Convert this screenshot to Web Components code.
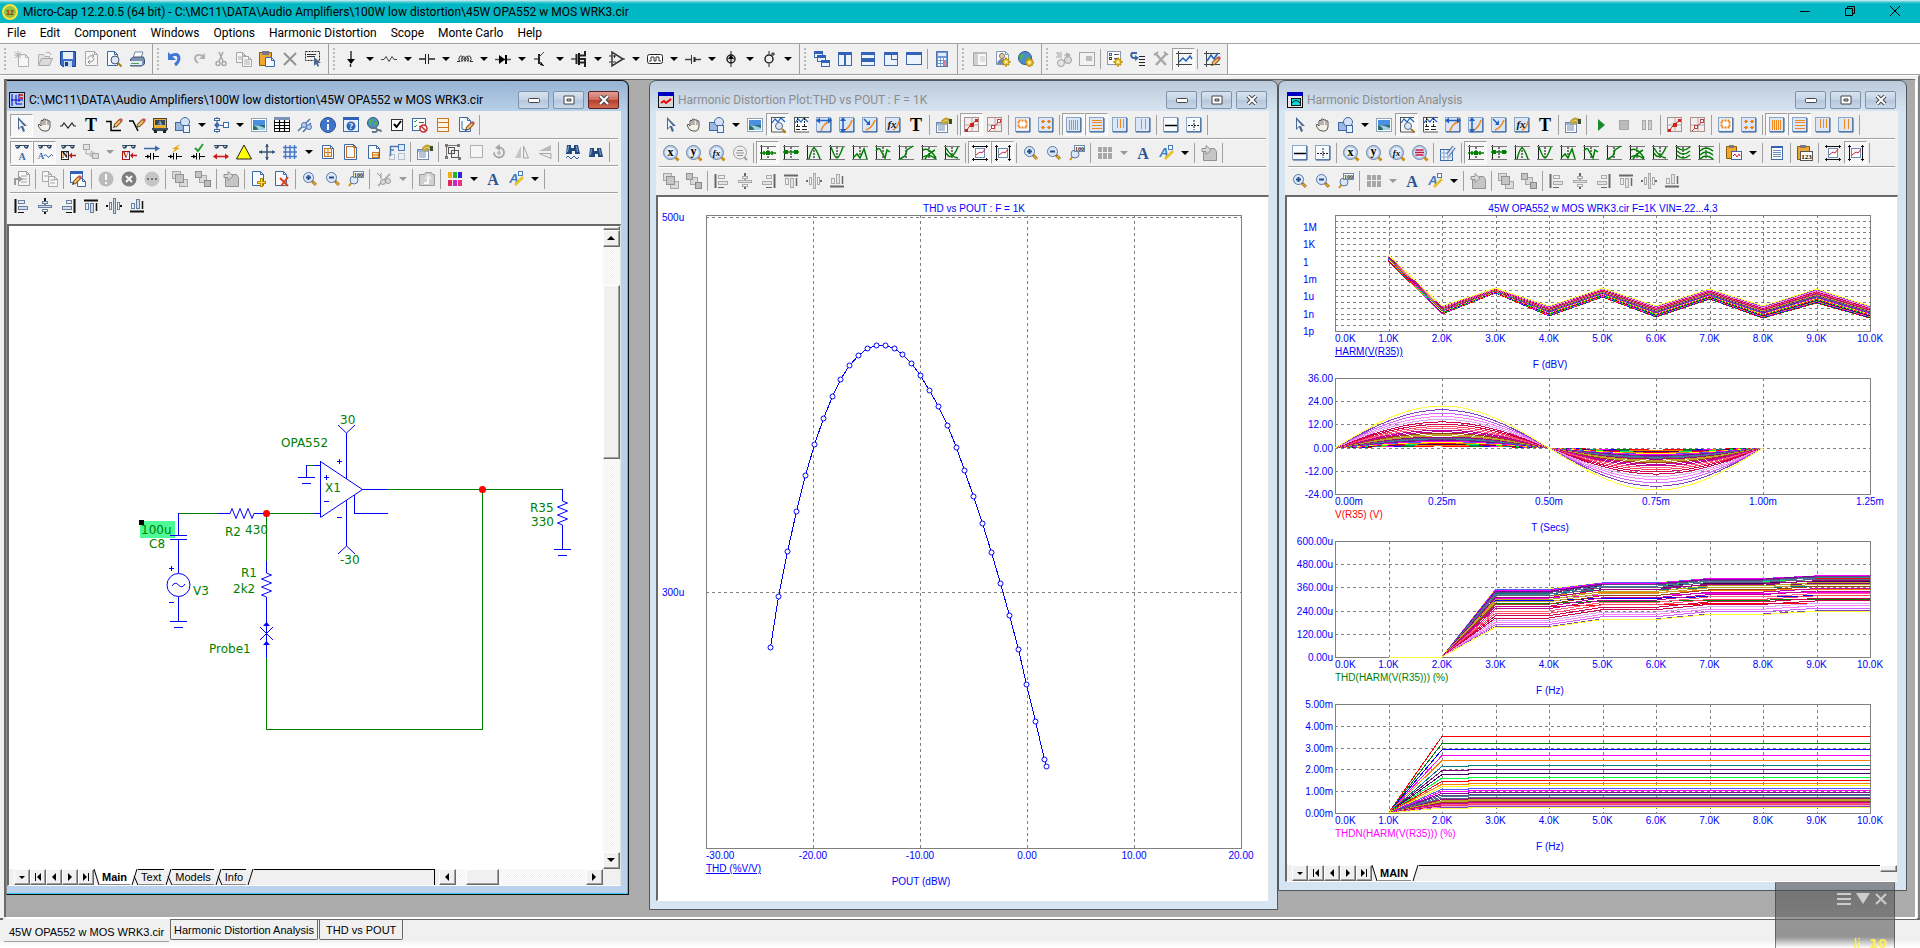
<!DOCTYPE html>
<html lang="en">
<head>
<meta charset="utf-8">
<title>Micro-Cap 12.2.0.5 (64 bit)</title>
<style>
  html, body {
    margin: 0;
    height: 100%;
    overflow: hidden;
  }
  body {
    background: #fff;
    color: #000;
    font: 12px/16px Roboto, "Open Sans", sans-serif;
  }
</style>
</head>
<body>
<mc-app>
  <mc-titlebar slot="top">Micro-Cap 12.2.0.5 (64 bit) - C:\MC11\DATA\Audio Amplifiers\100W low distortion\45W OPA552 w MOS WRK3.cir</mc-titlebar>
  <mc-menubar slot="top" items="File,Edit,Component,Windows,Options,Harmonic Distortion,Scope,Monte Carlo,Help"></mc-menubar>
  <mc-toolbar slot="bands" band items="new~ open~ save revert~ preview print"></mc-toolbar>
  <mc-toolbar slot="bands" band items="undo redo~ cut~ copy~ paste del~ selbox"></mc-toolbar>
  <mc-toolbar slot="bands" band items="gnd v res v cap v ind v diode v npn v mos v opamp v pulse v batt v isrc v vsrc v"></mc-toolbar>
  <mc-toolbar slot="bands" band items="cascade tilev tileh overlap maximize | calc"></mc-toolbar>
  <mc-toolbar slot="bands" band items="panel~ usergear globegear"></mc-toolbar>
  <mc-toolbar slot="bands" band items="convert~ pane~ | listgear goto tools~ scope* | scopepen"></mc-toolbar>

  <mc-window active style="--left: 0px; --top: 0px; --width: 623px; --height: 815px" label="C:\MC11\DATA\Audio Amplifiers\100W low distortion\45W OPA552 w MOS WRK3.cir" icon="appsch">
    <mc-toolbar slot="tools" items="cursor* hand zigzag bigT ortho diag bus shapes v flow v picture table link info help globelink check listno rows pagepen |"></mc-toolbar>
    <mc-toolbar slot="tools" items="textA* attrA* nodeN tree~ w nodeV current power cond pins tri cross grid v pagegrid pageblank pagetitle region | props | group blank~ rotate~ fliph~ flipv~ | findwave find |"></mc-toolbar>
    <mc-toolbar slot="tools" items="pagego~ | copytree~ | editwin | bang~ xcircle~ dots~ | front~ back~ | boxgo~ | pageadd pagedel | zoomin zoomout zoom100 | probe~ w | folderup~ | colors v fontA fillA v |"></mc-toolbar>
    <mc-toolbar slot="tools" items="alignl alignc alignr alignt alignm alignb"></mc-toolbar>
    <mc-schematic></mc-schematic>
    <mc-sheets slot="foot" tabs="Main,Text,Models,Info" scroll></mc-sheets>
  </mc-window>

  <mc-window style="--left: 643px; --top: 0px; --width: 629px; --height: 830px; --row: 28px" label="Harmonic Distortion Plot:THD vs POUT : F = 1K" icon="appplot">
    <mc-toolbar slot="tools" items="cursor hand shapes v picture scalemode* cursormode panx pany pan fx bigT | props | markon* markoff | sqdash sqdots | gridv* gridh* gridv3 gridv2 | hline hdash |"></mc-toolbar>
    <mc-toolbar slot="tools" items="zx zy zfx zlist~ | mnext* mnear mpeak mvalley mhigh mlow minfl mtop mbot | tagh* tagv* | zoomin zoomout zoom100 | palette~ w fontA fillA v | boxgo~ |"></mc-toolbar>
    <mc-toolbar slot="tools" items="front~ back~ | alignl~ alignc~ alignr~ alignt~ alignm~ alignb~"></mc-toolbar>
    <mc-plots data="pout"></mc-plots>
  </mc-window>

  <mc-window style="--left: 1272px; --top: 0px; --width: 629px; --height: 811px; --row: 28px" label="Harmonic Distortion Analysis" icon="apphda">
    <mc-toolbar slot="tools" items="cursor hand shapes v picture scalemode* cursormode panx pany pan fx bigT | props | play stop~ pause~ | markon markoff | sqdash sqdots | gridv* gridh* gridv3 gridv2 |"></mc-toolbar>
    <mc-toolbar slot="tools" items="hline hdash | zx zy zfx zred | sheetpen | mnext* mnear mpeak mvalley mhigh mlow minfl mtop mbot mglow mghigh | pastewave v | textpage | paste123 | tagh tagv* |"></mc-toolbar>
    <mc-toolbar slot="tools" items="zoomin zoomout zoom100 | palette~ w fontA fillA v | boxgo~ | front~ back~ | alignl~ alignc~ alignr~ alignt~ alignm~ alignb~"></mc-toolbar>
    <mc-plots data="analysis"></mc-plots>
    <mc-sheets slot="foot" tabs="MAIN"></mc-sheets>
  </mc-window>

  <mc-doctabs slot="bottom" tabs="45W OPA552 w MOS WRK3.cir,Harmonic Distortion Analysis,THD vs POUT"></mc-doctabs>
  <mc-gadget slot="over">li&nbsp; <b>10</b></mc-gadget>
</mc-app>

<script>
// ---- icons, all on a 16 x 16 grid ----
const P = (d, stroke = '#000', width = 1, fill = 'none') =>
  `<path d="${d}" stroke="${stroke}" stroke-width="${width}" fill="${fill}"/>`
const F = (d, fill = '#000') => `<path d="${d}" fill="${fill}"/>`
const R = (x, y, w, h, fill = 'none', stroke = 'none') =>
  `<rect x="${x}" y="${y}" width="${w}" height="${h}" fill="${fill}" stroke="${stroke}"/>`
const C = (x, y, r, fill = 'none', stroke = 'none', width = 1) =>
  `<circle cx="${x}" cy="${y}" r="${r}" fill="${fill}" stroke="${stroke}" stroke-width="${width}"/>`
const T = (s, x, y, size, fill = '#000', font = 'Liberation Serif', style = '') =>
  `<text x="${x}" y="${y}" font-size="${size}" font-weight="bold" font-family="${font}, serif" text-anchor="middle" fill="${fill}" ${style}>${s}</text>`
const dash = (shape, pattern = '2 1') => shape.replace('/>', ` stroke-dasharray="${pattern}"/>`)

const BLUE = '#3c68a8'
const SKY = '#dbe7f7'
const ORANGE = '#c87820'
const GREEN = '#008000'

const page = (x = 2.5, y = 1.5, w = 11, h = 13, c = BLUE) =>
  P(`M${x} ${y}h${w - 3}l3 3v${h - 3}h-${w}z`, c, 1, '#f8fbff') + P(`M${x + w - 3} ${y}v3h3`, c)
const pencil = (x = 0, y = 0) =>
  `<g transform="translate(${x} ${y})">` + P('M5 9l6-6', '#8a5a20', 4) + P('M5 9l6-6', '#f4c070', 2) +
  P('M10 4l2-2', '#d05050', 3) + F('M3 11l1-3 2 2z', '#333') + '</g>'
const glasses = F('M1 1h5v2q-2 3-4 1zM15 1h-5v2q2 3 4 1z', '#33475e') + P('M5 1.5h6', '#33475e') + F('M2 2h2v1h-2zM11 2h2v1h-2z', '#9cc4e8')
const gear = (x, y) =>
  P(`M${x - 4.5} ${y}h9M${x} ${y - 4.5}v9M${x - 3} ${y - 3}l6 6M${x + 3} ${y - 3}l-6 6`, '#b88c10', 2) + C(x, y, 3, '#f0d040', '#c09810') + C(x, y, 1, '#fff')
const lens = (x = 6.5, y = 6.5, r = 5) =>
  P(`M${x + r * 0.7} ${y + r * 0.7}l4 4`, '#b07a18', 3) + P(`M${x + r * 0.7 + 1} ${y + r * 0.7 + 1}l3 3`, '#f0c050', 1) + C(x, y, r, SKY, '#5578a8')
const disc = inner => P('M12 12l3.5 3.5', '#d09018', 3) + C(7.5, 7.5, 7, '#b8cdea', '#7088a8') + C(7.5, 7.5, 5, '#e8f0fa') + inner
const win = (x, y, w, h) => R(x + 0.5, y + 0.5, w - 1, h - 1, '#edf3fc', BLUE) + R(x, y, w, 3, '#2f62b8')
const chart = R(0.5, 0.5, 14, 14, SKY, '#8ba6c8') + P('M15 1v14H1', '#24508e')
const mode = d => P('M1.5 0v15', '#222') + P('M0 1.5h16M0 14.5h16', '#777') + dash(P('M8 2v12')) + P(d, GREEN, 1.5)
const cap2 = P('M1 12.5h5M10 12.5h5M6.5 9v6.5M9.5 9v6.5') + F('M6 12.5l-3-2v4z')
const bars = d => chart + P(d, '#f08820')
const globe = (x, y, r) => C(x, y, r, '#4a8ad0', '#30588c') + F(`M${x - r + 1} ${y - 2}q3-3 5-2l-1 3 -2 1 1 3 -2-1zM${x + 1} ${y}l3-2v4l-2 1z`, '#50b050')
const binoc = F('M2 4h4v3h3V4h4l2 9h-5v-3h-3v3H1z', '#23487c') + P('M3.5 5l-1 6M11.500 5l1 6', '#8ab0dc')

const icons = {
  new: page(4.5, 3.5, 10, 12, '#888') + P('M4 0v8M0 4h8M1 1l6 6M7 1L1 7', '#888'),
  open: P('M1.5 14V3.5h5l1 2h5v2', '#888', 1, '#ddd') + P('M1.5 14.5l3-7h11l-3 7z', '#777', 1, '#ccc') + P('M9 2q4-2 5 2', '#777'),
  save: P('M.5 .5h15v15h-13l-2-2z', '#16408c', 1, '#3c6cc8') + R(3, 1, 10, 7, '#e8f0fc') + R(4, 10, 8, 6, '#c8d8f0') + R(5, 11, 3, 4, '#16408c'),
  revert: page(2.5, .5, 12, 14, '#777') + P('M5 8q0-4 5-3M11 7q0 4-5 4M9 3l2 2-2 2M7 9l-2 2 2 2', '#555'),
  preview: page(1.5, .5, 10, 14) + P('M12 12l3.5 3.5', '#b07a18', 2) + C(9, 9, 4, SKY, '#405878'),
  print: P('M4 7l2-6h8l-2 6', '#7088a0', 1, '#fff') + P('M1.5 8l3-2h10l1 3v4l-3 2h-11z', '#405878', 1, '#7a92b0') + R(1, 10, 12, 4, '#e6ecf4') + R(2, 12, 8, 1, '#48a060'),
  undo: P('M3 5q8-4 9 2 0 4-4 7', '#3f78d8', 3) + F('M1 1v8h8z', '#3f78d8'),
  redo: P('M13 5Q6 2 5 7q0 3 3 5', '#888', 2) + F('M15 2v6H9z', '#888'),
  cut: P('M6 1l4 9M10 1L6 10', '#777', 1.5) + C(5, 12.5, 2, 'none', '#777', 1.5) + C(11, 12.5, 2, 'none', '#777', 1.5),
  copy: page(.5, 1.5, 9, 10, '#777') + page(6.5, 5.5, 9, 10, '#777') + P('M8 9h5M8 11h6M8 13h6M2 6h4M2 8h4', '#888'),
  paste: P('M.5 1.5h12v13H.5z', '#8a5a10', 1, '#eea830') + R(3, 0, 7, 4, '#778') + page(6.5, 6.5, 9, 9),
  del: P('M2 2l12 12M14 2L2 14', '#555', 2),
  selbox: dash(R(.5, .5, 14, 9, 'none', '#222')) + P('M2 3.5h9M2 5.5h8', '#333') + F('M9 6l0 9 2-2 2 3 1-1-1-3h3z', '#4a6890'),
  gnd: P('M8 0v11', '#333', 1.5) + F('M4 8h8l-4 5z') + P('M7.5 13v3', '#333', 1.5),
  res: P('M0 8.5h3l2-3 3 5 3-5 2 3h3', '#444'),
  cap: P('M0 8h6M10 8h6', '#555', 2) + P('M6.5 3v10M9.5 3v10', '#222'),
  ind: P('M0 10.5h3a2 3 0 1 1 2 0a2 3 0 1 1 3 0a2 3 0 1 1 3 0a2 3 0 1 1 2 0h3', '#333'),
  diode: P('M0 8.5h16', '#555', 1.5) + F('M4 4v9l6-4.5z') + P('M11 4v9', '#000', 2),
  npn: P('M1 8h5', '#555', 1.5) + P('M6 3v10', '#222', 2) + P('M6 6l5-5M6 10l5 5', '#444') + F('M8 11l3 4-4-1z'),
  mos: P('M0 8h5', '#555', 1.5) + P('M5.5 3v10', '#222', 2) + P('M8 2v12', '#111', 2) + P('M8 4.5h6V0M8 11.5h6V16M9 8h5v4', '#222', 2),
  opamp: P('M3 1v14l11-7z', '#333', 1.5, '#eee') + P('M0 5h3M0 11h3M14 8h2M4 5h3M5.5 4v3M4 11h3', '#333'),
  pulse: `<rect x=".5" y="3.5" width="15" height="9" rx="2" fill="#fff" stroke="#222"/>` + P('M2 10h2V6h3v4h2V6h3v4h2', '#333'),
  batt: P('M0 8.5h6M9 8.5h7', '#444', 1.5) + P('M6.5 4v9', '#333') + P('M9.5 6v5', '#222', 2),
  isrc: P('M8 0v16', '#222') + C(8, 8, 4, '#ddd', '#222', 1.5) + F('M5 8h6L8 4z') + P('M8 5v7'),
  vsrc: P('M8 0v3M8 13v3M12 1v4M10 3h4', '#222') + C(8, 8, 4, '#eee', '#222', 1.5),
  cascade: win(0, 0, 9, 7) + win(3, 4, 9, 7) + win(7, 9, 9, 7),
  tilev: win(1, 1, 7, 14) + win(8, 1, 7, 14),
  tileh: win(1, 1, 14, 7) + win(1, 8, 14, 7),
  overlap: win(1, 1, 14, 14) + win(8, 1, 7, 8),
  maximize: win(0, 1, 16, 13),
  calc: R(2.5, .5, 11, 15, '#6f98d8', '#5078a8') + R(4, 2, 8, 3, '#dfeaff') + F('M4 7h2v2H4zM7 7h2v2H7zM10 7h2v2h-2zM4 10h2v2H4zM7 10h2v2H7zM4 13h2v2H4zM7 13h2v2H7z', '#fff') + R(10, 10, 2, 5, '#f08080'),
  panel: R(1.5, 1.5, 13, 13, '#fff', '#777') + R(2, 2, 4, 12, '#bbb') + R(1, 1, 14, 2, '#999') + P('M8 6h5M8 8h5M8 10h5', '#aaa'),
  usergear: page(1.5, .5, 12, 13, '#8898b0') + C(7, 5, 2.5, '#f0c898', '#777') + F('M2 13q1-5 5-5t4 5z', '#6a88b0') + gear(11, 11),
  globegear: globe(7, 7, 6.5) + gear(11.5, 11.5),
  convert: P('M0 2h6M1 4h5M0 6h6M8 4h6', '#777') + C(5, 12, 3.5, '#ddd', '#666') + C(12, 9, 3.5, '#ccc', '#666') + F('M10 1l5 3-5 3z', '#888'),
  pane: R(.5, 1.5, 15, 13, '#f4f4f4', '#777') + R(7, 5, 6, 5, '#999'),
  listgear: R(.5, .5, 13, 13, '#fff', '#8898b0') + R(2.5, 2.5, 2, 2, '#fff', BLUE) + R(2.5, 6.5, 2, 2, '#fff', '#444') + P('M7 3.5h5M7 7.5h5', '#555') + gear(11, 11),
  goto: P('M7 2H2q-2 3 1 5h3', BLUE, 2) + F('M5 4v6l4-3z', BLUE) + P('M9 5.5h6M9 8.5h6M9 11.5h6M9 14.5h6', '#222'),
  tools: P('M3 3l10 11M13 3L3 14', '#777', 2.5) + P('M1 4l4-3M11 1l4 3', '#777', 2),
  scope: P('M2.5 0v16M0 13.5h16M0 2.5h16', '#444') + P('M3 11l4-4 3 3 4-5 2 3', '#2060c0', 1.5),
  scopepen: P('M2.5 0v16M0 13.5h16M0 2.5h16', '#444') + P('M3 10l4-6 3 4 4-6', '#2060c0', 1.5) + pencil(4, 4),

  cursor: F('M4 0v13l3-3 2 5 2-1-2-5h4z', '#4a6890') + F('M5 3v8l2-2h3z', '#eef4fb'),
  hand: P('M4 13q-4-5-2-6l2 2V4q1-2 2 0 0-3 2-2l1 1q2-1 2 1 2-1 2 1v5q-1 4-3 4H7z', '#555', 1, '#f6efe6') + P('M6 4v4M8 3v5M11 4v4', '#777'),
  zigzag: P('M0 9h2l2-3 4 5 4-5 2 3h2', '#222', 1.2),
  bigT: T('T', 8, 14, 18),
  ortho: P('M0 4.5h5v9h10', '#000', 1.5) + pencil(4, 0),
  diag: P('M0 4h4l5 10', '#000', 1.5) + pencil(4, 0),
  bus: R(1.5, 1.5, 13, 12, '#f0b030', '#444') + R(3, 3, 10, 5, '#3a4654') + R(0, 11, 16, 2, '#405060') + R(2, 13, 3, 3, '#222') + R(11, 13, 3, 3, '#222') + T('A', 8, 8, 6, '#9cf'),
  shapes: R(.5, 5.5, 9, 8, '#9db8e0', BLUE) + C(10, 5, 4.5, '#d6e2f4', BLUE) + R(8.5, 8.5, 6, 7, '#eaf1fb', BLUE),
  flow: P('M4 0v16', BLUE) + F('M1 1h6v3H1zM4 5l3 3-3 3-3-3zM1 12h6v3H1z', BLUE) + R(2, 2, 4, 1, '#fff') + R(2, 13, 4, 1, '#fff') + P('M7 8.5h3', BLUE) + R(10.5, 5.5, 5, 5, '#fff', BLUE),
  picture: R(.5, 1.5, 15, 13, '#fff', '#90a4bc') + R(2, 3, 12, 5, '#4a90e0') + R(2, 8, 12, 5, '#2f6d6a') + F('M2 8q6 0 12 3v2H7q0-3-5-5z', '#9fd0e8'),
  table: R(.5, .5, 15, 14, '#fff', '#222') + R(0, 0, 16, 3, '#7b94b4') + P('M0 5.5h16M0 8.5h16M0 11.5h16M5.5 3v12M10.5 3v12', '#000', 1.2),
  link: P('M1 14L13 2M6 15l8-9', '#4a74b4', 1.5) + C(7, 8, 2.5, '#bcd0ec', '#4a74b4') + C(12, 10, 2.5, '#bcd0ec', '#4a74b4'),
  info: C(8, 8, 7.5, '#3f74cc', '#2a5090') + R(7, 7, 2, 6, '#fff') + R(7, 3, 2, 2, '#fff'),
  help: R(.5, .5, 15, 14, '#eaf1fc', BLUE) + R(0, 0, 16, 3, '#2f62b8') + C(8, 9, 4.5, '#2f62b8') + T('?', 8, 12, 9, '#fff'),
  globelink: globe(7, 6, 5.5) + P('M5 11h4q2 0 2 2t-2 2H6M10 13h3q2 0 2 2', '#667788', 1.8),
  check: R(2.5, 2.5, 11, 11, '#fff', '#333') + P('M5 7l2.5 3L12 4', '#000', 2),
  listno: R(.5, 1.5, 13, 12, '#fff', BLUE) + P('M2 4l1 1 2-2M2 9l1 1 2-2', '#3a9a3a') + P('M7 5.5h5M7 9.5h3', '#555') + C(11.5, 11.5, 3.5, '#fff', '#c03030', 1.5) + P('M9 9l5 5', '#c03030', 1.5),
  rows: R(2.5, 1.5, 11, 13, '#fff4e4', ORANGE) + P('M2 5.5h12M2 10.5h12', ORANGE),
  pagepen: page(1.5, .5, 11, 14) + P('M4 4v8l4 1', BLUE) + pencil(4, 3),

  textA: glasses + T('A', 8, 16, 10, BLUE),
  attrA: glasses + T('A', 4, 15, 9, BLUE) + P('M7 12q1-3 3 0t3 0 3 0', BLUE),
  nodeN: glasses + R(1.5, 7.5, 7, 8, '#fff', '#222') + T('N', 5, 14, 8) + F('M9 11.5l3-3v6z', '#c01818') + P('M11 11.5h5', '#c01818', 1.5),
  tree: R(.5, .5, 6, 5, '#ddd', '#777') + P('M3 6v4h6', '#777') + F('M8 6l6 4-2 5-6-3z', '#aaa') + R(9.5, 9.5, 6, 5, '#ccc', '#777'),
  nodeV: glasses + R(1.5, 7.5, 7, 8, '#fff', '#b01010') + T('V', 5, 14, 8, '#b01010') + F('M9 11.5l3-3v6z', '#c01818') + P('M11 11.5h5', '#c01818', 1.5),
  current: P('M0 4.5h12', BLUE, 1.5) + F('M11 1.5l5 3-5 3z', BLUE) + cap2,
  power: F('M13 0L5 5l3 0-3 4 8-5-3 0z', '#e8a810') + cap2,
  cond: P('M5 4l3 3 5-7', '#28a030', 2) + cap2,
  pins: glasses + P('M1 12.5h14', '#d01818', 1.5) + F('M0 12.5l4-3v6zM16 12.5l-4-3v6z', '#d01818'),
  tri: P('M8 1L15.5 15H.5z', '#222', 1, '#ffff00'),
  cross: P('M8 0v16M0 8h16', '#3a5878', 1.5) + F('M8 0l2 3H6zM8 16l2-3H6zM0 8l3-2v4zM16 8l-3-2v4z', '#3a5878'),
  grid: P('M3.5 1v14M8 1v14M12.5 1v14M1 3.5h14M1 8h14M1 12.5h14', '#4a78c8', 1.5),
  pagegrid: page() + R(4.5, 4.5, 7, 8, '#fff0d8', ORANGE) + P('M8 4v8M4 8.5h8', ORANGE),
  pageblank: page(1.5, .5, 12, 15) + R(3.5, 2.5, 8, 11, 'none', ORANGE),
  pagetitle: page() + R(6.5, 8.5, 6, 5, '#ffe0b0', ORANGE) + P('M7 11h5', ORANGE),
  region: P('M1.5 12V2.5h8M1 6l4 0', '#4a78b8', 1.5) + R(9.5, .5, 6, 6, '#dce8f8', '#4a78b8') + dash(R(.5, 10.5, 5, 5, 'none', '#7890b0'), '1 1') + dash(R(9.5, 9.5, 6, 6, 'none', '#7890b0'), '1 1'),
  props: R(.5, 5.5, 11, 10, '#fff', '#7088a8') + P('M2 9h7M2 11h7M2 13h7', '#7088b0') + R(1, 6, 10, 2, '#9cb4d4') + F('M5 4q4-5 7-3l3 1v5l-4-1-4 2z', '#c0a030') + P('M7 5l3-2 3 2', '#f0e080') + R(13, 2, 3, 5, '#3a5030'),
  group: R(3.5, 3.5, 6, 6, 'none', '#555') + R(6.5, 6.5, 7, 7, 'none', '#555') + F('M0 0h3v3H0zM12 0h3v3h-3zM0 12h3v3H0zM13 13h3v3h-3z', '#777') + P('M3 1.5h9M1.5 3v9', '#777'),
  blank: R(2.5, 1.5, 12, 12, '#fafafa', '#888'),
  rotate: C(8, 9, 2, '#999') + P('M8 3.5a5 5 0 1 1-5 5', '#777', 2) + F('M9 0v7L4 3.5z', '#777'),
  fliph: F('M7 2v12H1z', '#aaa') + P('M9.5 2v12h5z', '#777', 1, '#eee'),
  flipv: F('M14 1v6H2z', '#999') + P('M2 9.5h12v5z', '#777', 1, '#eee'),
  findwave: binoc.replace(/<path/g, '<path transform="translate(0 -3)"') + P('M1 14l2-2 3 3 3-3 3 3 2-2', '#2f62b8'),
  find: binoc,
  pagego: page(4.5, .5, 11, 14, '#666') + P('M7 5h6M7 8h6M7 11h6', '#777') + P('M1 14V8h5', '#666', 2) + F('M5 5l4 3-4 3z', '#666'),
  copytree: page(.5, .5, 9, 10, '#777') + page(6.5, 5.5, 9, 10, '#777') + P('M8 9h5M8 12h5M2 5h5', '#777'),
  editwin: R(.5, .5, 12, 11, '#fff', BLUE) + R(0, 0, 13, 3, '#2f62b8') + page(7.5, 7.5, 8, 8) + pencil(-1, 3),
  bang: C(8, 8, 7.5, '#999') + R(7, 3, 2, 6, '#fff') + R(7, 11, 2, 2, '#fff'),
  xcircle: C(8, 8, 7.5, '#333') + P('M5 5l6 6M11 5l-6 6', '#fff', 2),
  dots: C(8, 8, 7.5, '#aaa') + F('M3 7h2v2H3zM7 7h2v2H7zM11 7h2v2h-2z', '#222'),
  front: R(.5, .5, 8, 7, '#ccc', '#777') + R(7.5, 8.5, 8, 7, '#ccc', '#777') + R(3.5, 3.5, 8, 8, '#aaa', '#555'),
  back: R(4.5, 4.5, 7, 7, '#ccc', '#777') + R(.5, .5, 6, 6, '#aaa', '#555') + R(9.5, 9.5, 6, 6, '#999', '#444'),
  boxgo: P('M2.5 15.5v-9h5l2-3h4l2 3v9z', '#555', 1, '#aaa') + P('M1 3.5h4V.5l5 4.500-5 4.500V6.500H1z', '#555', 1, '#ccc'),
  pageadd: page(1.5, .5, 11, 14) + F('M9 7h3v3h3v3h-3v3H9v-3H6v-3h3z', '#b88a00') + F('M10 8h1v3h3v1h-3v3h-1v-3H7v-1h3z', '#ffe040'),
  pagedel: page(1.5, .5, 11, 14) + P('M6 7l8 8M14 6L7 15', '#e04018', 2),
  zoomin: lens() + P('M4 6.5h5M6.5 4v5', '#24508e', 2),
  zoomout: lens() + P('M4 6.5h5', '#24508e', 2),
  zoom100: P('M4 11l-3 4', '#d09018', 2) + C(6, 9, 4, SKY, '#607898') + R(5.5, .5, 10, 6, '#fff', '#7088a8') + T('100', 10.5, 6, 6, '#222'),
  probe: P('M1 2l4 4M5 2v6', '#555') + P('M2 15L14 3', '#666', 1.5) + C(7, 11, 2.5, '#ccc', '#666') + C(12, 10, 2.5, '#ccc', '#666'),
  folderup: P('M.5 14.500v-11h5l1-2h6l1 2h2v11z', '#666', 1, '#bbb') + P('M5 12h4V6', '#fff', 2) + F('M6 8h7l-4-5z', '#eee'),
  colors: F('M1 1h4v6H1z', '#f0b010') + F('M6 1h4v6H6z', '#28b428') + F('M11 1h4v6h-4z', '#2828d8') + F('M1 9h4v6H1z', '#e02860') + F('M6 9h4v6H6z', '#c828c8') + F('M11 9h4v6h-4z', '#f03080'),
  palette: F('M1 2h4v5H1zM6 2h4v5H6zM11 2h4v5h-4zM1 8h4v6H1zM6 8h4v6H6zM11 8h4v6h-4z', '#777'),
  fontA: T('A', 8, 14, 16, '#2c5490'),
  fillA: T('A', 6, 12, 13, '#3c78c0', 'Liberation Sans', 'font-style="italic"') + R(10.5, .5, 4, 4, '#fff', '#4a78b8') + P('M7 14l8-8', '#e8c020', 2.5),
  alignl: P('M1.5 1v14', '#111', 2) + R(4.5, 2.5, 6, 3, '#e8eef8', '#6880a0') + R(4.5, 8.5, 9, 3, '#d0dcec', '#6880a0') + P('M4 14.5h6', '#111'),
  alignc: P('M8 0v3M8 6.5v3M8 13v3', '#111', 2) + R(5.5, 3.5, 5, 2, '#e8eef8', '#6880a0') + R(1.5, 7.5, 13, 2, '#d0dcec', '#6880a0') + R(5.5, 11.5, 5, 2, '#fff', '#6880a0'),
  alignr: P('M14.5 1v14', '#111', 2) + R(6.5, 2.5, 5, 3, '#e8eef8', '#6880a0') + R(2.5, 8.5, 9, 3, '#d0dcec', '#6880a0') + P('M6 14.5h6', '#111'),
  alignt: P('M1 2.5h14', '#111', 2) + R(2.5, 5.5, 3, 6, '#e8eef8', '#6880a0') + R(7.5, 5.5, 3, 9, '#d0dcec', '#6880a0') + P('M13.5 5v8', '#111', 1.5),
  alignm: P('M0 8h2M14 8h2', '#111', 2) + R(3.5, 4.5, 2, 7, '#e8eef8', '#6880a0') + R(7.5, .5, 2, 15, '#d0dcec', '#6880a0') + R(11.5, 4.5, 2, 7, '#fff', '#6880a0'),
  alignb: P('M1 13.5h14', '#111', 2) + R(2.5, 5.5, 3, 5, '#e8eef8', '#6880a0') + R(7.5, 1.5, 3, 9, '#d0dcec', '#6880a0') + P('M13.5 3v8', '#111', 1.5),

  scalemode: P('M1.5 0v15H16M1 .5h14', '#555') + P('M2 6l3-4 3 3 3-4 4 4', '#2060c0', 1.2) + P('M12 12l3.5 3.5', '#b07a18', 2) + C(9, 9, 3.5, SKY, '#506888'),
  cursormode: R(1, 1, 14, 14, '#fff') + P('M1.5 0v15H16M1 .5h15', '#555') + P('M2 6l3-4 3 3 3-4 4 4', '#2060c0', 1.2) + dash(P('M4.5 1v9M11.5 1v9', '#222')) + P('M3 9.5h4M9 9.5h5M3 12.5h4M9 12.5h5', '#222'),
  panx: chart + P('M5 14q2-7 9-10', '#f08820', 1.5) + P('M1 3.5h13', '#2060c0', 1.5) + F('M0 3.5l4-3v6zM16 3.5l-4-3v6z', '#2060c0'),
  pany: chart + P('M6 13q5-3 7-10', '#f08820', 1.5) + P('M4 2v12', '#2060c0', 1.5) + F('M4 0l3 4H1zM4 16l3-4H1z', '#2060c0'),
  pan: chart + P('M4 13q6-2 9-10', '#f08820', 1.5) + P('M2 2l5 5', '#2060c0', 1.5) + F('M8 8V3L4 8z', '#2060c0'),
  fx: chart + P('M8 13q5-2 6-9', '#f08820', 1.5) + T('fx', 7, 11, 11, '#111', 'Liberation Serif', 'font-style="italic"'),
  markon: R(.5, .5, 14, 14, '#f4eded', '#a89090') + P('M8 1v14M1 8h14', '#b8a8a8') + P('M2 14q4-7 11-11', '#c02020') + F('M1 12h3v3H1zM6 6h4v4H6zM11 2h3v3h-3z', '#d02020'),
  markoff: R(.5, .5, 14, 14, '#f4eded', '#a89090') + P('M8 1v14M1 8h14', '#b8a8a8') + P('M2 14L7 9l2-1 3-4', '#c04040') + R(4.5, 8.5, 3, 3, '#fff', '#c04040') + R(10.5, 2.5, 3, 3, '#fff', '#c04040'),
  sqdash: chart + R(2, 2, 12, 11, '#f8fbff') + `<rect x="3.5" y="3.5" width="8" height="7" fill="#fff" stroke="#f08010" stroke-width="2" stroke-dasharray="2 1"/>`,
  sqdots: chart + F('M3 4h4v1H3zM4 3h2v3H4zM9 4h4v1H9zM10 3h2v3h-2zM3 10h4v1H3zM4 9h2v3H4zM9 10h4v1H9zM10 9h2v3h-2z', '#f08010'),
  gridv: bars('M3.5 3v10M5.5 3v10M7.5 3v10M9.5 3v10M11.5 3v10'),
  gridh: bars('M3 3.5h10M3 5.5h10M3 8.5h10M3 11.5h10'),
  gridv3: bars('M5.5 2v9M8.5 2v9M11.5 2v9'),
  gridv2: bars('M6.5 2v10M10.5 2v10'),
  hline: chart + R(1, 1, 13, 13, '#f8fbff') + P('M2 8.5h12', '#000', 1.5),
  hdash: chart + R(1, 1, 13, 13, '#f8fbff') + dash(P('M2 8.5h12M8 3v10', '#222')),
  zx: disc(T('x', 7.5, 11, 12)),
  zy: disc(T('y', 7.5, 10, 12)),
  zfx: disc(T('fx', 7.5, 11, 9, '#000', 'Liberation Serif', 'font-style="italic"')),
  zlist: C(8, 7.5, 6.5, '#eee', '#666') + P('M5 5.5h6M4 8h8M5 10.5h6', '#555') + P('M12 12l3 3', '#666', 2),
  zred: disc(P('M3.5 5h8M3 7.5h9M3.5 10h8', '#c01840', 1.5)),
  mnext: mode('M0 8h16M4 6v4M12 6v4') + F('M6 6h4v4H6z', GREEN),
  mnear: mode('M0 7h16') + F('M1 5h4v4H1zM11 5h4v4h-4z', GREEN),
  mpeak: mode('M3 14Q6 3 8 3t6 11'),
  mvalley: mode('M2 2Q6 13 8 13t6-11'),
  mhigh: mode('M1 13l4-4 3 4 4-9 3 10'),
  mlow: mode('M1 6q3-5 5 0l4 7 2-8 3 2'),
  minfl: mode('M2 14l5-3 2-6 6-4'),
  mtop: mode('M2 12Q8 8 15 14M2 5Q8 2 15 13M4 14q3-5 10-9'),
  mbot: mode('M2 3Q7 12 14 13M2 8q3 5 6 3t6-9'),
  mglow: mode('M2 2q6 6 13 0M2 6q6 6 13 0M2 10q6 6 13 0'),
  mghigh: mode('M2 6q6-6 13 0M2 10q6-6 13 0M2 14q6-6 13 0'),
  tagh: P('M0 1.5h16M0 14.5h16M1.5 0v3M14.5 0v3M1.5 13v3M14.5 13v3', '#111') + R(3.5, 3.5, 9, 9, '#fff', '#6c8cbc') + P('M4 10l4-3 2 1 3-4', '#d02040'),
  tagv: P('M1.5 0v16M14.5 0v16M0 1.5h3M13 1.5h3M0 14.5h3M13 14.5h3', '#111') + R(3.5, 3.5, 9, 9, '#fff', '#6c8cbc') + P('M4 10l4-3 2 1 3-4', '#d02040'),
  play: F('M5 2v12l7-6z', '#1c8a28'),
  stop: R(3.5, 3.5, 9, 9, '#999', '#777'),
  pause: R(3.5, 3.5, 3, 9, '#bbb', '#777') + R(9.5, 3.5, 3, 9, '#bbb', '#777'),
  sheetpen: R(.5, 4.5, 12, 11, '#eef4fc', BLUE) + P('M0 8h13M0 12h13M4 5v10M8 5v10', '#8aa6cc') + P('M8 10l6-8', '#5078a8', 4) + P('M8 10l6-8', '#dce8f8', 2),
  pastewave: P('M.5 1.5h10v12H.5z', '#8a5a10', 1, '#eea830') + R(3, 0, 5, 3, '#778') + R(5.5, 6.5, 10, 8, '#fff', BLUE) + P('M7 11l2-2 2 3 2-3 1 2', '#d02040'),
  textpage: R(2.5, 1.5, 11, 13, '#fff', BLUE) + R(2, 1, 12, 2, '#2f62b8') + P('M4 5.5h8M4 7.5h8M4 9.5h8M4 11.5h8', '#6a8cc0'),
  paste123: P('M.5 1.5h12v13H.5z', '#8a5a10', 1, '#eea830') + R(3, 0, 6, 3, '#778') + R(3.5, 6.5, 12, 9, '#fff', '#555') + T('123', 9.5, 14, 7),
  appsch: R(.5, .5, 15, 15, '#b8d0f0', '#111') + P('M3 2v12M7 3v9h6M10 2v8M2 8h12', '#0000d0') + P('M10 3h4M11 6h3', '#e00000', 1.5),
  appplot: R(.5, .5, 15, 15, '#d8d8d8', '#111') + R(0, 0, 16, 4, '#0000c0') + P('M3 11l3-2 2 2 5-4', '#f00000', 2),
  apphda: R(.5, .5, 15, 15, '#e8e8e8', '#111') + R(0, 0, 16, 4, '#0000c0') + R(4.5, 6.5, 9, 7, '#00e0e0', '#111') + P('M5 11q4-5 8 0', '#111')
}
const svg = (name, size = 16) =>
  `<svg width="${size}" height="${size}" viewBox="0 0 16 16" overflow="visible" aria-hidden="true">${icons[name]}</svg>`

class Base extends HTMLElement {
  constructor() {
    super()
    this.attachShadow({ mode: 'open' })
  }

  connectedCallback() {
    this.shadowRoot.innerHTML = this.render()
  }

  list(name) {
    return (this.getAttribute(name) || '').split(',')
  }
}

class App extends Base {
  render() {
    return /* html */ `
      <style>
        :host {
          display: flex;
          flex-direction: column;
          height: 100vh;
          overflow: hidden;
        }
        .bands {
          display: flex;
          height: 30px;
          border-top: 1px solid #a0a0a0;
          border-bottom: 1px solid #a0a0a0;
        }
        .edge {
          flex: 1;
          min-height: 0;
          display: flex;
          background: #f0f0f0;
          border-top: 1px solid #fff;
          padding: 3px 3px 2px 4px;
          border-right: 2px solid #808080;
        }
        .desktop {
          flex: 1;
          position: relative;
          overflow: hidden;
          background: #ababab;
          border: 1px solid #696969;
          border-width: 1px 0 0 2px;
          box-shadow: 2px 2px 0 #fff;
        }
      </style>
      <slot name="top"></slot>
      <nav class="bands"><slot name="bands"></slot></nav>
      <div class="edge"><main class="desktop"><slot></slot></main></div>
      <slot name="bottom"></slot>
      <slot name="over"></slot>
    `
  }
}

class TitleBar extends Base {
  render() {
    return /* html */ `
      <style>
        :host {
          display: flex;
          align-items: center;
          height: 23px;
          padding-left: 2px;
          background: linear-gradient(#d4f2f5, #50ccd4 2px, #00b7c3 4px);
        }
        h1 {
          flex: 1;
          margin: 0 0 0 5px;
          font-size: 12px;
          font-weight: normal;
        }
        button {
          width: 45px;
          height: 20px;
          padding: 0;
          border: 0;
          background: none;
        }
        button:last-of-type {
          margin-right: 3px;
        }
      </style>
      <svg width="16" height="16" viewBox="0 0 16 16" aria-hidden="true">
        <circle cx="8" cy="8" r="7" fill="#8cc63f" stroke="#ffe040" stroke-width="2"/>
        <text x="8" y="11" font-size="7" font-weight="bold" font-family="Liberation Sans, sans-serif" text-anchor="middle" fill="#b02020">12</text>
      </svg>
      <h1><slot></slot></h1>
      <button aria-label="Minimize"><svg width="10" height="10"><path d="M0 5.5h10" stroke="#000"/></svg></button>
      <button aria-label="Restore"><svg width="10" height="10"><path d="M.5 2.5h7v7h-7zM2.5 2V.5h7v7H8" stroke="#000" fill="none"/></svg></button>
      <button aria-label="Close"><svg width="10" height="10"><path d="M0 0l10 10M10 0L0 10" stroke="#000"/></svg></button>
    `
  }
}

class MenuBar extends Base {
  render() {
    return /* html */ `
      <style>
        :host {
          display: flex;
          height: 20px;
          background: #fff;
        }
        button {
          padding: 0 7px;
          border: 0;
          background: none;
          font: inherit;
        }
      </style>
      ${this.list('items').map(i => `<button>${i}</button>`).join('')}
    `
  }
}

class ToolBar extends Base {
  item(token) {
    if (token === '|') return '<i></i>'
    if (token === 'v' || token === 'w') {
      return `<button class="arrow" aria-label="More"><svg width="8" height="4"><path d="M0 0h8L4 4z" fill="${token === 'v' ? '#000' : '#999'}"/></svg></button>`
    }
    const name = token.replace(/[*~]/, '')
    const cls = token.endsWith('*') ? 'on' : token.endsWith('~') ? 'off' : ''
    return `<button class="${cls}" aria-label="${name}">${svg(name)}</button>`
  }

  render() {
    return /* html */ `
      <style>
        :host {
          display: flex;
          align-items: center;
          box-sizing: border-box;
          height: var(--row, 27px);
          margin: 0 3px;
          border-bottom: 1px solid #a0a0a0;
          box-shadow: 0 1px 0 #fff;
        }
        :host(:last-of-type) {
          border-bottom-color: transparent;
          box-shadow: none;
        }
        :host([band]) {
          height: 30px;
          margin: 0;
          padding-right: 4px;
          background: #f0f0f0;
          border-bottom: 0;
          border-right: 1px solid #a0a0a0;
          box-shadow: none;
        }
        .grip {
          display: none;
        }
        :host([band]) .grip {
          display: block;
          width: 2px;
          height: 22px;
          margin: 0 4px;
          background: repeating-linear-gradient(#bbb 0 2px, transparent 2px 4px);
        }
        button {
          box-sizing: border-box;
          display: flex;
          align-items: center;
          justify-content: center;
          width: 23px;
          height: 23px;
          padding: 0;
          border: 1px solid transparent;
          background: none;
        }
        .arrow {
          width: 15px;
        }
        .on {
          border-color: #a0a0a0 #fff #fff #a0a0a0;
          background: repeating-conic-gradient(#fff 0 25%, #f0f0f0 0 50%) 0 0 / 2px 2px;
        }
        .off svg {
          filter: grayscale(1);
          opacity: .6;
        }
        i {
          width: 1px;
          height: 20px;
          margin: 0 2px;
          background: #a0a0a0;
        }
      </style>
      <span class="grip"></span>
      ${this.getAttribute('items').split(' ').map(t => this.item(t)).join('')}
    `
  }
}

class Window extends Base {
  render() {
    return /* html */ `
      <style>
        :host {
          position: absolute;
          left: var(--left);
          top: var(--top);
          width: var(--width);
          height: var(--height);
          box-sizing: border-box;
          display: flex;
          flex-direction: column;
          padding: 0 8px 8px 6px;
          border: 1px solid #505860;
          border-radius: 7px 7px 0 0;
          background: linear-gradient(#bccbdb, #d7e4f2 31px);
          color: #8c8c8c;
        }
        :host([active]) {
          padding: 0 7px 8px 0;
          border-color: #111;
          border-left-color: #909090;
          border-radius: 0 7px 0 0;
          box-shadow: inset -1px -1px 0 #30c8f0;
          background: linear-gradient(#97b3d2, #b9d1ea 31px);
          color: #000;
        }
        header {
          box-sizing: border-box;
          display: flex;
          align-items: center;
          gap: 4px;
          height: 30px;
          padding: 7px 2px 0;
        }
        h2 {
          flex: 1;
          margin: 0;
          font-size: 12px;
          font-weight: normal;
          white-space: nowrap;
        }
        header button {
          width: 31px;
          height: 18px;
          padding: 0;
          border: 1px solid #7f93ab;
          border-radius: 2px;
          background: linear-gradient(#d8e3ef, #c2d1e3 50%, #b4c6dc 50%, #c8d8ea);
        }
        header svg {
          display: block;
          flex: none;
          margin: 0 auto;
        }
        :host([active]) .close {
          border-color: #5c2020;
          background: linear-gradient(#e0a098, #cc6a5c 50%, #b83c2c 50%, #d06c50);
        }
        .body {
          flex: 1;
          min-height: 0;
          display: flex;
          flex-direction: column;
          background: #f0f0f0;
          color: #000;
        }
        :host([active]) .tools {
          padding: 1px 0 4px;
        }
        .doc {
          flex: 1;
          min-height: 0;
          display: flex;
          flex-direction: column;
          overflow: hidden;
          background: #fff;
          border: solid;
          border-width: 2px 1px 1px 2px;
          border-color: #696969 #e3e3e3 #fff #696969;
        }
        .view {
          flex: 1;
          min-height: 0;
          display: flex;
        }
      </style>
      <header>
        ${svg(this.getAttribute('icon'))}
        <h2>${this.getAttribute('label')}</h2>
        <button aria-label="Minimize"><svg width="12" height="8"><rect x=".5" y="2.5" width="11" height="4" rx="1" fill="#fff" stroke="#444"/></svg></button>
        <button aria-label="Maximize"><svg width="12" height="10"><path d="M1 1h10v8H1zM4 4h4v2H4z" fill="#fff" fill-rule="evenodd" stroke="#444"/></svg></button>
        <button class="close" aria-label="Close"><svg width="12" height="10"><path d="M2 1l8 8M10 1L2 9" stroke="#444" stroke-width="4"/><path d="M2 1l8 8M10 1L2 9" stroke="#fff" stroke-width="2"/></svg></button>
      </header>
      <div class="body">
        <div class="tools"><slot name="tools"></slot></div>
        <div class="doc">
          <div class="view"><slot></slot></div>
          <slot name="foot"></slot>
        </div>
      </div>
    `
  }
}

const BEVEL = 'border: 1px solid; border-color: #fff #696969 #696969 #fff; box-shadow: inset -1px -1px 0 #a0a0a0; background: #f0f0f0; padding: 0; box-sizing: border-box; display: flex; align-items: center; justify-content: center;'
const tri = (d, w = 9, h = 9) => `<svg width="${w}" height="${h}" aria-hidden="true"><path d="${d}" fill="#000"/></svg>`

class Schematic extends Base {
  render() {
    const zig = (x, y, vertical) => {
      const step = vertical
        ? 'l5 2l-10 4l10 4l-10 4l10 4l-10 4l5 2'
        : 'l2-5l4 10l4-10l4 10l4-10l4 10l2-5'
      return `M${x} ${y}${step}`
    }
    const ground = (x, y) => `M${x - 8} ${y}h17M${x - 4} ${y + 6}h9`
    return /* html */ `
      <style>
        :host {
          flex: 1;
          display: flex;
          min-width: 0;
        }
        .sheet {
          flex: 1;
          min-width: 0;
          overflow: hidden;
        }
        svg {
          display: block;
        }
        text {
          font: 12px "DejaVu Sans", sans-serif;
          fill: #008000;
        }
        .wire, .part {
          fill: none;
          stroke: #008000;
          shape-rendering: crispEdges;
        }
        .part {
          stroke: #0000ff;
        }
        .smooth {
          shape-rendering: auto;
        }
        .scroll {
          display: flex;
          flex-direction: column;
          width: 17px;
          background: repeating-conic-gradient(#fff 0 25%, #f0f0f0 0 50%) 0 0 / 2px 2px;
        }
        .scroll button {
          ${BEVEL}
          height: 17px;
        }
        .scroll .split {
          height: 4px;
        }
        .scroll .thumb {
          height: 174px;
          margin: 38px 0 auto;
        }
      </style>
      <div class="sheet">
        <svg width="594" height="642" viewBox="9 226 594 642">
          <rect x="140" y="521" width="35" height="17" fill="#4dfa96"/>
          <path class="wire" d="M178.5 513.5h40M266 513.5h48M266.5 513v48M266.5 657v72.5h216V489.5M387 489.5h175.5M306 465.5h8"/>
          <path class="part" d="M178.5 513v22M170 535.5h17M170 539.5h17M178.5 540v33M178.5 597v24${ground(178, 621.5)}M169 568.5h5M171.5 566v5M169 602.5h5
            M218 513.5h12M254 513.5h12M314 513.5h6M314 465.5h6M306.5 465v12${ground(306, 477.5)}M320.5 461v56
            M346.5 433v46M346.5 500v46M337 461.5h5M339.5 459v5M324 477.5h5M326.5 475v5M324 501.5h5M337 517.5h5
            M362 489.5h25M354.5 495v18.5h33
            M562.5 489v12M562.5 525v24${ground(562, 549.5)}
            M266.5 561v12M266.5 597v61"/>
          <path class="part smooth" d="M320.5 461.5l42 28l-42 28M338 425l8.5 8l8.5-8M338 554l8.5-8l8.5 8
            ${zig(230, 513.5)}${zig(562.5, 501, true)}${zig(266.5, 573, true)}M260 627l13 13M273 627l-13 13
            M172 586q3-5 6.5-1t6.5-1"/>
          <circle class="part smooth" cx="178.5" cy="585" r="11.5"/>
          <path d="M263 626h7l-3.5-4zM263 645h7l-3.5-4z" fill="#00f"/>
          <circle cx="266.5" cy="513.5" r="3.5" fill="#f00"/>
          <circle cx="482.5" cy="489.5" r="3.5" fill="#f00"/>
          <rect x="139" y="520" width="5" height="5"/>
          <text x="340" y="424">30</text>
          <text x="281" y="447">OPA552</text>
          <text x="325" y="492">X1</text>
          <text x="225" y="536">R2</text>
          <text x="245" y="534">430</text>
          <text x="141" y="534">100u</text>
          <text x="149" y="548">C8</text>
          <text x="193" y="595">V3</text>
          <text x="241" y="577">R1</text>
          <text x="233" y="593">2k2</text>
          <text x="209" y="653">Probe1</text>
          <text x="340" y="564">-30</text>
          <text x="530" y="512">R35</text>
          <text x="531" y="526">330</text>
        </svg>
      </div>
      <div class="scroll">
        <button class="split" aria-label="Split"></button>
        <button aria-label="Up">${tri('M0 6h8L4 2z')}</button>
        <button class="thumb" aria-label="Scroll"></button>
        <button aria-label="Down">${tri('M0 2h8L4 6z')}</button>
      </div>
    `
  }
}

class Sheets extends Base {
  tab(label, i, last) {
    const lead = i ? '' : '<svg width="6" height="16"><path d="M0 0h1l5 16H0z" fill="#f0f0f0"/><path d="M0 0l5 16" stroke="#000" fill="none"/></svg>'
    return `<button class="tab">${lead}<span>${label}</span><svg width="8" height="16"><path d="M8 0L2 16h6z" fill="#f0f0f0"/><path d="M7 0L2 16${last ? '' : 'M4 7l4 9'}" stroke="#000" fill="none"/></svg></button>`
  }

  render() {
    const tabs = this.list('tabs')
    const bottom = this.hasAttribute('scroll') ? `
      <button class="nav wide" aria-label="Left">${tri('M6 0v8L2 4z')}</button>
      <div class="trough"><button class="thumb" aria-label="Scroll"></button></div>
      <button class="nav wide" aria-label="Right">${tri('M2 0v8l4-4z')}</button>
      <span class="corner"></span>` : '<span class="size"></span>'
    return /* html */ `
      <style>
        :host {
          display: flex;
          height: 16px;
          background: #f0f0f0;
          padding-left: 5px;
        }
        .nav {
          ${BEVEL}
          width: 16px;
          height: 16px;
        }
        .wide {
          width: 17px;
        }
        .tabs {
          flex: 1;
          display: flex;
          border-right: 1px solid #000;
          margin-right: 4px;
        }
        :host(:not([scroll])) .tabs {
          border: 0;
          margin: 0;
        }
        .tab {
          display: flex;
          height: 16px;
          padding: 0;
          border: 0;
          background: #f0f0f0;
          font: 11px/14px "Liberation Sans", Arial, sans-serif;
        }
        .tab span {
          padding: 0 3px;
          border-top: 1px solid #000;
          border-bottom: 1px solid #888;
        }
        .tab:first-child {
          background: #fff;
          font-weight: bold;
        }
        .tab:first-child span {
          padding-left: 2px;
          border-top-color: transparent;
        }
        .rest {
          flex: 1;
          border-top: 1px solid #000;
        }
        .trough {
          width: 130px;
          padding-left: 10px;
          box-sizing: border-box;
          background: repeating-conic-gradient(#fff 0 25%, #f0f0f0 0 50%) 0 0 / 2px 2px;
        }
        .thumb {
          ${BEVEL}
          width: 33px;
          height: 16px;
        }
        .corner {
          width: 17px;
        }
        .size {
          ${BEVEL}
          width: 17px;
          height: 7px;
        }
      </style>
      <button class="nav" aria-label="List">${tri('M1 3h6L4 6z')}</button>
      <button class="nav" aria-label="First">${tri('M1 0h1v8H1zM7 0v8L3 4z')}</button>
      <button class="nav" aria-label="Previous">${tri('M6 0v8L2 4z')}</button>
      <button class="nav" aria-label="Next">${tri('M2 0v8l4-4z')}</button>
      <button class="nav" aria-label="Last">${tri('M1 0v8l4-4zM6 0h1v8H6z')}</button>
      <div class="tabs">
        ${tabs.map((t, i) => this.tab(t, i, i === tabs.length - 1)).join('')}
        <span class="rest"></span>
      </div>
      ${bottom}
    `
  }
}

// ---- plots ----
const CURVE_X = [130, 138, 147, 156, 165, 174, 183, 192, 200, 209, 218, 227, 236, 245, 254, 262, 271, 280, 289, 298, 307, 316, 324, 333, 342, 351, 360, 369, 378, 386, 395, 404, 406]
const CURVE_Y = [458, 407, 362, 322, 286, 255, 229, 207, 190, 176, 166, 159, 156, 156, 159, 165, 174, 186, 201, 217, 236, 258, 281, 307, 334, 363, 394, 426, 460, 495, 532, 570, 577]
const PENS = ['#ff0000', '#008000', '#0000ff', '#ff00ff', '#ff8000', '#008080', '#800080', '#400060', '#00ff40', '#ff0000', '#ff8000', '#ffff00', '#5858ff', '#ff00ff', '#8000a0', '#604080', '#4080a0', '#606080', '#a00080', '#b8a020', '#c0a030', '#a04010', '#c000a0', '#c00090', '#ff6080', '#ff4060', '#d00050', '#d00050', '#d8a8f0', '#ff80ff', '#d060ff', '#8040c0', '#ffff40']
const LEFT = 48
const WIDE = 535

const text = (s, x, y, anchor = 'middle', color = '#0000ff', more = '') =>
  `<text x="${x}" y="${y + 4}" text-anchor="${anchor}" fill="${color}" ${more}>${s}</text>`
const line = (points, color) => `<polyline points="${points.map(p => p.map(n => n.toFixed(1)).join()).join(' ')}" stroke="${color}"/>`

const frame = ({ top, height, cols, rows, xs, ys, yx = 46, yAnchor = 'end', expr, color, title, gap = 13 }) => {
  let out = `<g class="grid">`
  for (let i = 1; i < cols; i++) out += `<path d="M${LEFT + Math.round(WIDE * i / cols)} ${top}v${height}"/>`
  rows.forEach(y => { out += `<path d="M${LEFT} ${top + y}h${WIDE}"/>` })
  out += `</g><rect class="frame" x="${LEFT}" y="${top}" width="${WIDE}" height="${height}"/>`
  xs.forEach((s, i) => {
    out += text(s, LEFT + WIDE * i / (xs.length - 1), top + height + 7, i ? 'middle' : 'start')
  })
  ys.forEach(([s, y]) => { out += text(s, yx, top + y, yAnchor) })
  const under = color === '#0000ff' ? 'text-decoration="underline"' : ''
  out += text(expr, LEFT, top + height + 7 + gap, 'start', color, under)
  out += text(title, LEFT + 215, top + height + 7 + gap * 2)
  return out
}
const kilo = Array.from({ length: 11 }, (_, i) => `${i}.0K`)
const spread = (labels, height) => labels.map((s, i) => [s, Math.round(height * i / (labels.length - 1))])
const inner = (n, height) => Array.from({ length: n - 1 }, (_, i) => Math.round(height * (i + 1) / n))

class Plots extends Base {
  pout() {
    const points = CURVE_X.map((x, i) => [x - 17.5, CURVE_Y[i] - 7.5])
    return text('THD vs POUT : F = 1K', LEFT + 268, 11) +
      frame({
        top: 18, height: 633, cols: 5, rows: [2, 377],
        xs: ['-30.00', '-20.00', '-10.00', '0.00', '10.00', '20.00'],
        ys: [['500u', 2], ['300u', 377]], yx: 4, yAnchor: 'start',
        expr: 'THD (%V/V)', color: '#0000ff', title: 'POUT (dBW)'
      }) +
      line(points, '#0000ff') +
      points.map(([x, y]) => `<circle cx="${x}" cy="${y}" r="2.5"/>`).join('')
  }

  analysis() {
    const k = i => LEFT + 53.5 * i
    const high = [255, 306, 288, 306, 288, 306, 289, 306, 289, 306].map(y => y - 197)
    const low = [261, 314, 293, 316, 297, 317, 299, 318, 303, 318].map(y => y - 197)
    let harm = ''
    let wave = ''
    let thd = ''
    let thdn = ''
    PENS.forEach((pen, i) => {
      const t = i / 32
      harm += line(high.map((y, j) => [k(j + 1), low[j] + (y - low[j]) * t]), pen)

      const amp = 42 * Math.pow(0.909, 32 - i)
      const sine = []
      for (let a = 0; a <= 64; a++) sine.push([LEFT + 428 * a / 64, 251 - amp * Math.sin(Math.PI * a / 32)])
      wave += line(sine, pen)

      // distortion at the tenth harmonic is what the THD vs POUT curve holds
      const full = 500 * Math.pow(0.6, (CURVE_Y[i] - 27) / 375)
      const at = f => 460 - full * f * 116 / 600
      const f3 = 0.94 - 0.29 * t
      const f5 = 0.97 - 0.15 * t
      const f7 = 0.99 - 0.06 * t
      thd += line([[k(1), 460], [k(2), 460], [k(3), at(f3)], [k(4), at(f3)], [k(5), at(f5)], [k(6), at(f5)], [k(7), at(f7)], [k(8), at(f7)], [k(9), at(1)], [k(10), at(1)]], pen)

      const v = Math.hypot(3.5 * Math.pow(0.909, i), 0.22)
      const flat = 616 - v * 21.8
      const dip = flat + (i > 4 ? 1 : 0)
      thdn += line([[k(1), 616], [k(2), dip], [k(2.5), dip], [k(2.5), flat], [k(10), flat]], pen)
    })
    return text('45W OPA552 w MOS WRK3.cir F=1K VIN=.22...4.3', LEFT + 268, 11) +
      frame({
        top: 18, height: 116, cols: 10, rows: inner(20, 116), xs: kilo,
        ys: ['1M', '1K', '1', '1m', '1u', '1n', '1p'].map((s, i) => [s, Math.round(12 + i * 52 / 3)]),
        yx: 16, yAnchor: 'start', expr: 'HARM(V(R35))', color: '#0000ff', title: 'F (dBV)'
      }) + harm +
      frame({
        top: 181, height: 116, cols: 5, rows: inner(5, 116),
        xs: ['0.00m', '0.25m', '0.50m', '0.75m', '1.00m', '1.25m'],
        ys: spread(['36.00', '24.00', '12.00', '0.00', '-12.00', '-24.00'], 116),
        expr: 'V(R35) (V)', color: '#ff0000', title: 'T (Secs)'
      }) + wave +
      frame({
        top: 344, height: 116, cols: 10, rows: inner(5, 116), xs: kilo,
        ys: spread(['600.00u', '480.00u', '360.00u', '240.00u', '120.00u', '0.00u'], 116),
        expr: 'THD(HARM(V(R35))) (%)', color: '#008000', title: 'F (Hz)'
      }) + thd +
      frame({
        top: 507, height: 109, cols: 10, rows: inner(5, 109), xs: kilo,
        ys: spread(['5.00m', '4.00m', '3.00m', '2.00m', '1.00m', '0.00m'], 109),
        expr: 'THDN(HARM(V(R35))) (%)', color: '#ff00ff', title: 'F (Hz)'
      }) + thdn
  }

  render() {
    return /* html */ `
      <style>
        :host {
          display: block;
          flex: 1;
          min-width: 0;
          overflow: hidden;
        }
        svg {
          display: block;
        }
        text {
          font: 10px "Liberation Sans", Arial, sans-serif;
        }
        .grid path, .frame {
          fill: none;
          stroke: #808080;
          shape-rendering: crispEdges;
        }
        .grid path {
          stroke-dasharray: 3 3;
        }
        polyline {
          fill: none;
          shape-rendering: crispEdges;
        }
        circle {
          fill: #fff;
          stroke: #0000ff;
        }
      </style>
      <svg width="611" height="702" viewBox="0 0 611 702">${this[this.getAttribute('data')]()}</svg>
    `
  }
}

class DocTabs extends Base {
  render() {
    return /* html */ `
      <style>
        :host {
          display: flex;
          align-items: flex-start;
          height: 28px;
          background: linear-gradient(#f0f0f0 20px, #fff 26px);
          border-top: 2px solid #696969;
          margin-top: -1px;
          padding-left: 3px;
        }
        button {
          height: 20px;
          padding: 0 3px;
          border: 1px solid #696969;
          border-top: 0;
          border-radius: 0 0 2px 2px;
          margin-right: 1px;
          background: #f0f0f0;
          font: 11px/18px "Liberation Sans", Arial, sans-serif;
        }
        button:first-of-type {
          height: 24px;
          margin: -2px 0 0;
          padding: 4px 5px 0;
          border-color: #f0f0f0 #f0f0f0 #a0a0a0;
        }
        button:last-of-type {
          padding: 0 6px;
        }
      </style>
      ${this.list('tabs').map(t => `<button>${t}</button>`).join('')}
    `
  }
}

class Gadget extends Base {
  render() {
    return /* html */ `
      <style>
        :host {
          position: absolute;
          right: 25px;
          bottom: 0;
          width: 118px;
          height: 65px;
          display: flex;
          flex-direction: column;
          justify-content: space-between;
          overflow: hidden;
          border: 1px solid rgba(60, 60, 60, .6);
          border-bottom: 0;
          background: linear-gradient(rgba(70, 70, 70, .55), rgba(110, 110, 110, .7) 54px, rgba(255, 255, 255, .9));
          color: #ffee50;
        }
        .bar {
          display: flex;
          justify-content: flex-end;
          gap: 5px;
          padding: 8px 7px;
        }
        button {
          display: block;
          padding: 0;
          border: 0;
          background: none;
        }
        svg {
          display: block;
        }
        p {
          height: 12px;
          margin: 0 7px;
          text-align: right;
          font: 13px/16px "DejaVu Sans", sans-serif;
        }
      </style>
      <div class="bar">
        <button aria-label="Menu"><svg width="14" height="14"><path d="M0 3h14M0 8h14M0 13h14" stroke="#ccc" stroke-width="2"/></svg></button>
        <button aria-label="Down"><svg width="14" height="14"><path d="M0 2h14L7 13z" fill="#ccc"/></svg></button>
        <button aria-label="Close"><svg width="12" height="14"><path d="M1 3l10 10M11 3L1 13" stroke="#ccc" stroke-width="2"/></svg></button>
      </div>
      <p><slot></slot></p>
    `
  }
}

customElements.define('mc-app', App)
customElements.define('mc-titlebar', TitleBar)
customElements.define('mc-menubar', MenuBar)
customElements.define('mc-toolbar', ToolBar)
customElements.define('mc-window', Window)
customElements.define('mc-schematic', Schematic)
customElements.define('mc-sheets', Sheets)
customElements.define('mc-plots', Plots)
customElements.define('mc-doctabs', DocTabs)
customElements.define('mc-gadget', Gadget)
</script>
</body>
</html>
